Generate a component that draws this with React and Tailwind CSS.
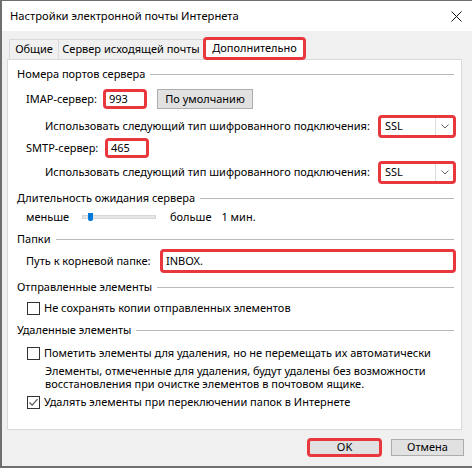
import { useState } from "react";

const red = "border-[3px] border-[#e8383d] rounded-[4px]";

function GroupHeader({ title, className = "" }) {
  return (
    <div className={`flex items-center h-[18px] ${className}`}>
      <span>{title}</span>
      <div className="flex-1 h-px bg-[#b9b9b9] ml-[5px]" />
    </div>
  );
}

function Checkbox({ checked }) {
  return (
    <div className="w-[13px] h-[13px] border border-[#333] bg-white flex items-center justify-center shrink-0">
      {checked && (
        <svg width="11" height="11" viewBox="0 0 11 11">
          <path d="M1.5 5.5 L4.2 8.2 L9.5 2.2" fill="none" stroke="#555" strokeWidth="1.2" />
        </svg>
      )}
    </div>
  );
}

function SslSelect({ className = "" }) {
  return (
    <div className={`w-[78px] h-[23px] ${red} bg-white flex items-center shrink-0 ${className}`}>
      <span className="flex-1 pl-[4px]">SSL</span>
      <div className="w-[18px] h-full border-l border-[#dcdcdc] flex items-center justify-center">
        <svg width="8" height="5" viewBox="0 0 8 5">
          <path d="M0.5 0.5 L4 4 L7.5 0.5" fill="none" stroke="#606060" strokeWidth="1" />
        </svg>
      </div>
    </div>
  );
}

export default function App() {
  const [tab] = useState(2);
  const tabs = [
    { t: "Общие", w: "w-[50px]" },
    { t: "Сервер исходящей почты", w: "w-[146px]" },
    { t: "Дополнительно", w: "w-[103px]" },
  ];

  return (
    <div
      className="w-[472px] h-[468px] bg-[#f0f0f0] flex flex-col border-l-2 border-b-2 border-t border-[#6f6f6f] text-[11px] text-black overflow-hidden whitespace-nowrap"
      style={{ fontFamily: '"Noto Sans", "Open Sans", sans-serif' }}
    >
      {/* title bar */}
      <div className="h-[30px] bg-white flex items-center pl-[8px] pr-[10px] shrink-0 text-[11.2px]">
        <span className="flex-1">Настройки электронной почты Интернета</span>
        <svg width="11" height="11" viewBox="0 0 11 11">
          <path d="M0.5 0.5 L10.5 10.5 M10.5 0.5 L0.5 10.5" stroke="#111" strokeWidth="1" />
        </svg>
      </div>

      {/* tabs */}
      <div className="flex items-end pl-[7px] pt-[6px] h-[28px] shrink-0">
        {tabs.map((x, i) =>
          i === tab ? (
            <div
              key={x.t}
              className={`${x.w} h-[23px] bg-white flex items-center justify-center ${red} -mb-px relative z-10`}
            >
              {x.t}
            </div>
          ) : (
            <div
              key={x.t}
              className={`${x.w} h-[20px] flex items-center justify-center border border-b-0 border-[#d9d9d9] -mr-px`}
            >
              {x.t}
            </div>
          )
        )}
      </div>

      {/* panel */}
      <div className="ml-[5px] w-[455px] h-[371px] bg-white border border-[#d9d9d9] pl-[9px] pr-[7px] pt-[5px] flex flex-col shrink-0">
        <GroupHeader title="Номера портов сервера" />

        <div className="flex items-center h-[18px] mt-[7px] pl-[9px]">
          <span className="w-[77px] shrink-0">IMAP-сервер:</span>
          <div className={`w-[44px] h-[20px] ${red} bg-white flex items-center pl-[3px]`}>993</div>
          <button className="ml-[10px] w-[96px] h-[20px] bg-[#e1e1e1] border border-[#adadad]">
            По умолчанию
          </button>
        </div>

        <div className="flex items-center h-[18px] mt-[9px] pl-[28px]">
          <span className="flex-1">Использовать следующий тип шифрованного подключения:</span>
          <SslSelect className="-mr-[2px]" />
        </div>

        <div className="flex items-center h-[18px] mt-[4px] pl-[9px]">
          <span className="w-[79px] shrink-0">SMTP-сервер:</span>
          <div className={`w-[44px] h-[20px] ${red} bg-white flex items-center pl-[3px]`}>465</div>
        </div>

        <div className="flex items-center h-[18px] mt-[6px] pl-[28px]">
          <span className="flex-1">Использовать следующий тип шифрованного подключения:</span>
          <SslSelect className="-mr-[2px]" />
        </div>

        <GroupHeader title="Длительность ожидания сервера" className="mt-[8px]" />

        <div className="flex items-center h-[18px] mt-[1px] pl-[9px]">
          <span className="w-[56px] shrink-0">меньше</span>
          <div className="relative w-[74px] h-[4px] bg-[#e7e7e7] border border-[#d6d6d6]">
            <div className="absolute left-[5px] -top-[3px] w-[5px] h-[8px] bg-[#0078d7] rounded-b-[2px]" />
          </div>
          <span className="ml-[14px]">больше</span>
          <span className="ml-[10px]">1 мин.</span>
        </div>

        <GroupHeader title="Папки" className="mt-[4px]" />

        <div className="flex items-center h-[18px] mt-[4px] pl-[9px]">
          <span className="w-[134px] shrink-0">Путь к корневой папке:</span>
          <div className={`flex-1 -mr-[2px] h-[24px] ${red} bg-white flex items-center pl-[3px]`}>
            INBOX.
          </div>
        </div>

        <GroupHeader title="Отправленные элементы" className="mt-[8px]" />

        <div className="flex items-center h-[18px] mt-[3px] pl-[10px] gap-[4px]">
          <Checkbox />
          <span>Не сохранять копии отправленных элементов</span>
        </div>

        <GroupHeader title="Удаленные элементы" className="mt-[4px]" />

        <div className="flex items-center h-[18px] mt-[5px] pl-[10px] gap-[4px]">
          <Checkbox />
          <span>Пометить элементы для удаления, но не перемещать их автоматически</span>
        </div>

        <div className="mt-[2px] pl-[28px] leading-[13px]">
          Элементы, отмеченные для удаления, будут удалены без возможности
          <br />
          восстановления при очистке элементов в почтовом ящике.
        </div>

        <div className="flex items-center h-[18px] mt-[3px] pl-[10px] gap-[4px]">
          <Checkbox checked />
          <span>Удалять элементы при переключении папок в Интернете</span>
        </div>
      </div>

      {/* buttons */}
      <div className="flex items-center pl-[305px] mt-[8px]">
        <div className={`w-[75px] h-[19px] ${red} bg-[#e1e1e1] flex items-center justify-center`}>
          OK
        </div>
        <button className="ml-[9px] w-[73px] h-[17px] bg-[#e1e1e1] border border-[#adadad] flex items-center justify-center">
          Отмена
        </button>
      </div>
    </div>
  );
}
